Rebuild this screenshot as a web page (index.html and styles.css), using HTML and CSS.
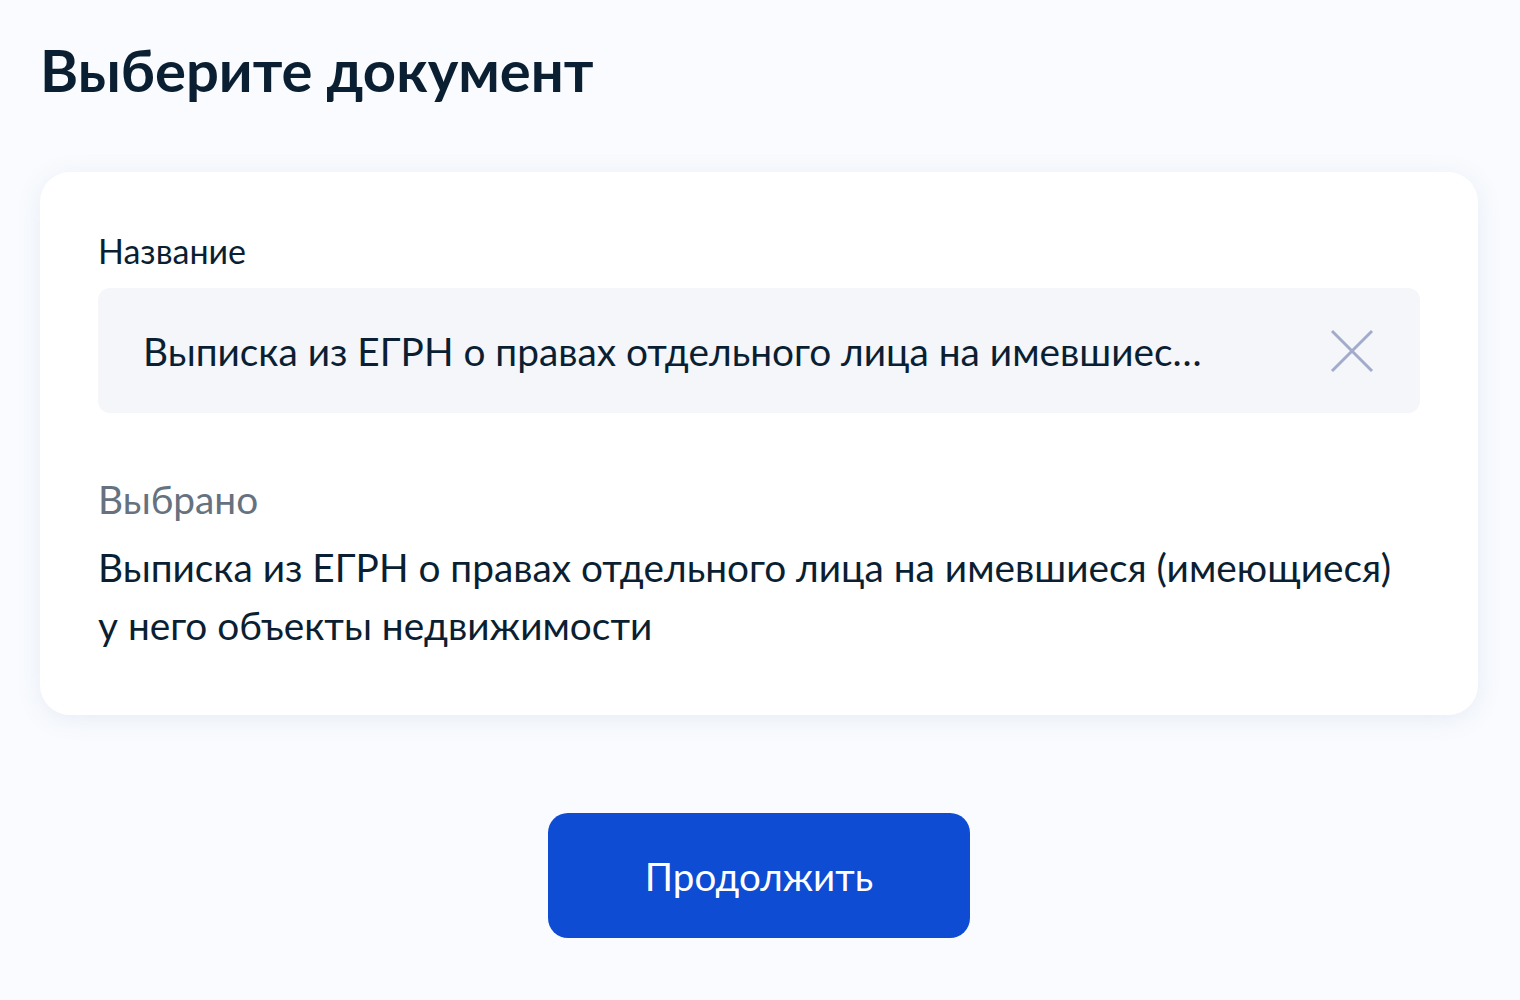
FILE: index.html
```html
<!DOCTYPE html>
<html lang="ru">
<head>
  <meta charset="UTF-8">
  <meta name="viewport" content="width=device-width, initial-scale=1.0">
  <title>Выберите документ</title>
  <link rel="stylesheet" href="styles.css">
</head>
<body>
  <div class='page'>
    <h1 class='title'>Выберите документ</h1>
    <div class='card'>
      <div class='label'>Название</div>
      <div class='field'>
        <div class='field-text'>Выписка из ЕГРН о правах отдельного лица на имевшиеся (имеющиеся) у него объекты недвижимости</div>
        <svg class='clear' width="44" height="44" viewBox="0 0 44 44">
          <path d="M2 2 L42 42 M42 2 L2 42" stroke="#a3abcb" stroke-width="3" fill="none"/>
        </svg>
      </div>
      <div class='chosen'>Выбрано</div>
      <div class='chosen-text'>Выписка из ЕГРН о правах отдельного лица на имевшиеся (имеющиеся) у него объекты недвижимости</div>
    </div>
    <div class='actions'>
      <div class='btn'>Продолжить</div>
    </div>
  </div>
</body>
</html>
```

FILE: styles.css
```css
body{
  margin:0px;
  background-color:#f9fbfe;
  font-family: Lato, "Noto Sans", sans-serif;
  color:#0b1f33;
}
.page{
  padding:25px 42px 0 40px;
}
.title{
  margin:0;
  font-size:58px;
  font-weight:700;
  line-height:90px;
}
.card{
  margin-top:57px;
  background-color:#fff;
  border-radius:30px;
  box-shadow:0 4px 24px rgba(105,130,180,0.12);
  padding:55px 58px 61px 58px;
}
.label{
  font-size:34px;
  line-height:48px;
}
.field{
  margin-top:13px;
  height:125px;
  background-color:#f4f6fa;
  border-radius:12px;
  display:flex;
  align-items:center;
  padding:0 46px 0 45px;
}
.field-text{
  flex:1;
  min-width:0;
  font-size:38.8px;
  white-space:nowrap;
  overflow:hidden;
  text-overflow:ellipsis;
  margin-right:120px;
}
.clear{
  flex:none;
}
.chosen{
  margin-top:62px;
  font-size:38.8px;
  line-height:48px;
  color:#66727f;
}
.chosen-text{
  margin-top:15px;
  padding-right:8px;
  font-size:38.8px;
  line-height:58px;
}
.actions{
  display:flex;
  justify-content:center;
  margin-top:98px;
}
.btn{
  width:422px;
  height:125px;
  background-color:#0d4cd3;
  border-radius:20px;
  color:#fff;
  font-size:38.5px;
  display:flex;
  justify-content:center;
  align-items:center;
}
```
